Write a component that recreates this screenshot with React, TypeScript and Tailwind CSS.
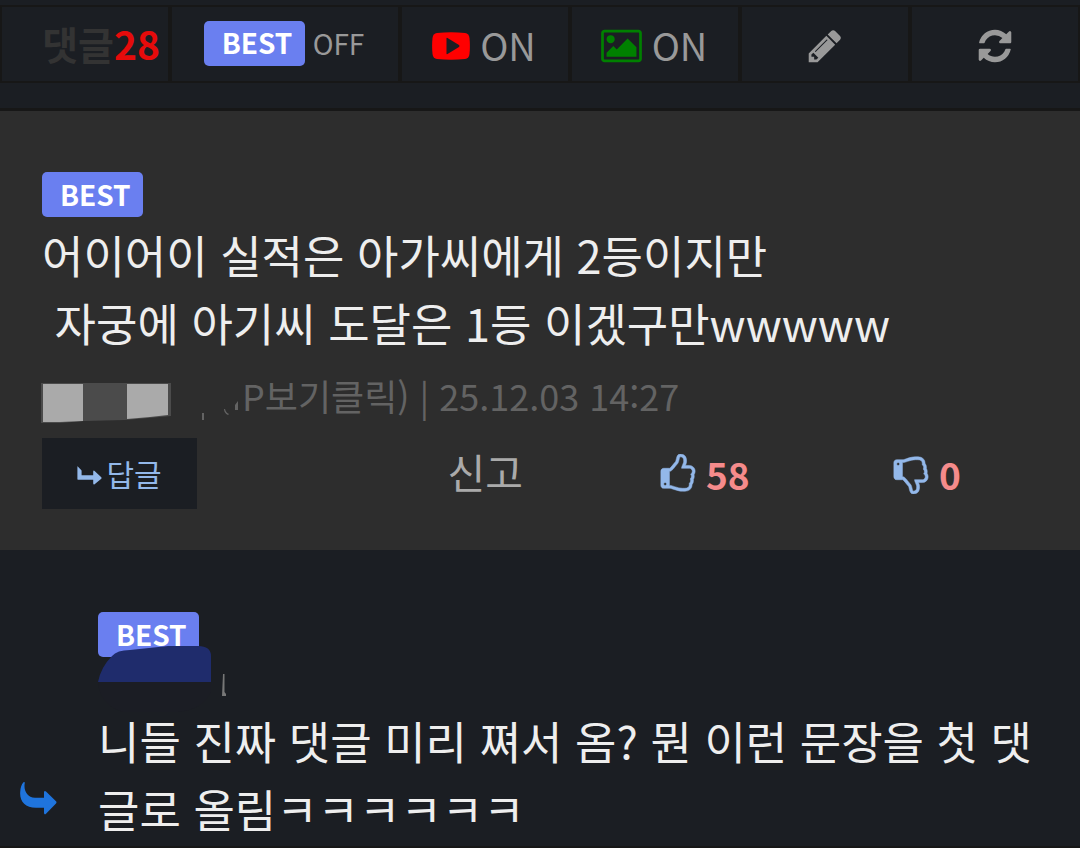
import React, { useState } from "react";

const PencilIcon = () => (
  <svg viewBox="0 0 1792 1792" className="mt-1 size-[38px] shrink-0" fill="currentColor" aria-hidden="true">
    <path d="M491 1536l91-91-235-235-91 91v107h128v128h107zm523-928q0-22-22-22-10 0-17 7l-542 542q-7 7-7 17 0 22 22 22 10 0 17-7l542-542q7-7 7-17zm-54-192l416 416-832 832h-416v-416zm683 96q0 53-37 90l-166 166-416-416 166-165q36-38 90-38 53 0 91 38l235 234q37 39 37 91z" />
  </svg>
);

const RefreshIcon = () => (
  <svg viewBox="0 0 1792 1792" className="mt-1 size-[38px] shrink-0" fill="currentColor" aria-hidden="true">
    <path d="M1639 1056q0 5-1 7-64 268-268 434.5t-478 166.5q-146 0-282.5-55t-243.5-157l-129 129q-19 19-45 19t-45-19-19-45v-448q0-26 19-45t45-19h448q26 0 45 19t19 45-19 45l-137 137q71 66 161 102t187 36q134 0 250-65t186-179q11-17 53-117 8-23 30-23h192q13 0 22.5 9.5t9.5 22.5zm25-800v448q0 26-19 45t-45 19h-448q-26 0-45-19t-19-45 19-45l138-138q-148-137-349-137-134 0-250 65t-186 179q-11 17-53 117-8 23-30 23h-199q-13 0-22.5-9.5t-9.5-22.5v-7q65-268 270-434.5t480-166.5q146 0 284 55.5t245 156.5l130-129q19-19 45-19t45 19 19 45z" />
  </svg>
);

const PictureIcon = () => (
  <svg viewBox="-64 0 1920 1792" className="mt-1 h-[38px] w-[41px] shrink-0 text-[#008000]" fill="currentColor" aria-hidden="true">
    <path d="M576 576q0 80-56 136t-136 56-136-56-56-136 56-136 136-56 136 56 56 136zm1024 384v448h-1408v-192l320-320 160 160 512-512zm96-704h-1600q-13 0-22.5 9.5t-9.5 22.5v1216q0 13 9.5 22.5t22.5 9.5h1600q13 0 22.5-9.5t9.5-22.5v-1216q0-13-9.5-22.5t-22.5-9.5zm160 32v1216q0 66-47 113t-113 47h-1600q-66 0-113-47t-47-113v-1216q0-66 47-113t113-47h1600q66 0 113 47t47 113z" />
  </svg>
);

const YoutubeIcon = () => (
  <svg viewBox="0 0 38 28" className="mt-1 h-7 w-[38px] shrink-0" aria-hidden="true">
    <path
      d="M5 1Q19-.4 33 1Q37 1.500 37.500 6Q38.300 14 37.500 22Q37 26.500 33 27Q19 28.400 5 27Q1 26.500.500 22Q-.3 14 .500 6Q1 1.500 5 1Z"
      fill="#ff0000"
    />
    <path d="M14.500 6.500Q14.500 5.500 15.500 6L27 13Q28 14 27 15L15.500 22Q14.500 22.500 14.500 21.500Z" fill="#1b1e23" />
  </svg>
);

const ThumbIcon = ({ down }: { down?: boolean }) => (
  <svg
    viewBox="0 0 1792 1792"
    className={down ? "size-10 shrink-0 -scale-y-100" : "size-10 shrink-0"}
    fill="#93b8ea"
    stroke="#93b8ea"
    strokeWidth="24"
    aria-hidden="true"
  >
    <path d="M384 1344q0-26-19-45t-45-19-45 19-19 45 19 45 45 19 45-19 19-45zm1152-576q0-51-39-89.500t-89-38.500h-352q0-58 48-159.500t48-160.500q0-98-32-145t-128-47q-26 26-38 85t-30.500 125.500-59.500 109.500q-22 23-77 91-4 5-23 30t-31.500 41-34.500 42.500-40 44-38.500 35.500-40 27-35.500 9h-32v640h32q13 0 31.500 3t33 6.500 38 11 35 11.500 35.500 12.500 29 10.500q211 73 342 73h121q192 0 192-167 0-26-5-56 30-16 47.500-52.500t17.500-73.500-18-69q53-50 53-119 0-25-10-55.500t-25-47.500q32-1 53.500-47t21.500-81zm128-1q0 89-49 163 9 33 9 69 0 77-38 144 3 21 3 43 0 101-60 178 1 139-85 219.500t-227 80.500h-129q-96 0-189.500-22.500t-216.500-65.500q-116-40-138-40h-288q-53 0-90.500-37.500t-37.500-90.500v-640q0-53 37.500-90.500t90.500-37.500h274q36-24 137-155 58-75 107-128 24-25 35.500-85.500t30.500-126.500 62-108q39-37 90-37 84 0 151 32.500t102 101.500 35 186q0 93-48 192h176q104 0 180 76t76 179z" />
  </svg>
);

const LevelIcon = () => (
  <svg viewBox="0 0 25 19" className="mt-1 h-[19px] w-[25px] shrink-0" fill="#93b8ea" aria-hidden="true">
    <path d="M.4.6Q0 0 .8.400L4.200 4Q4.600 4.500 4.600 5V9.300H16.200V5.500Q16.500 4 17.600 5L24.300 11.200Q24.900 12 24.300 12.700L17.600 18.300Q16.500 19 16.200 17.600V13.700H.9Q.4 13.700.4 13Z" />
  </svg>
);

const ReplyArrow = () => (
  <svg viewBox="0 0 37 33" className="h-[33px] w-[37px] shrink-0" fill="#1f74dd" aria-hidden="true">
    <path d="M3.500.200C4.500-.3 5 .2 4.700 1.500C3.500 8 7 15.800 15 15.800H24V10.500C24 9 25 8.500 26 9.500L36 19.200Q37 20.300 36 21.400L26 31.800C25 32.800 24 32.200 24 30.800V25.800H16C5 25.800-.5 19 .2 10C.5 5.500 1.500 2 3.500.200Z" />
  </svg>
);

const BestBadge = () => (
  <span className="inline-flex h-[45px] w-[101px] shrink-0 items-center rounded-[5px] bg-[#6a7ff0] pl-[18px] pb-0.5 text-[28px] font-bold leading-none text-white">
    BEST
  </span>
);

const cell = "flex items-center justify-center border-2 border-[#171717] text-[#999999]";

const App = () => {
  const [best, setBest] = useState(false);
  const [video, setVideo] = useState(true);
  const [image, setImage] = useState(true);

  return (
    <main
      lang="ko"
      className="min-h-screen bg-[#1b1e23] pt-[5px] font-['Noto_Sans_CJK_KR',sans-serif] text-[#eeeeee]"
    >
      <div className="grid h-[78px] grid-cols-[17fr_23fr_17fr_17fr_17fr_17fr]">
        <h2 className="flex items-center justify-end whitespace-nowrap border-2 border-[#171717] pr-2 pb-0.5 text-[39px] font-bold leading-none text-[#333333]">
          댓글<span className="text-[#e60b0b]">28</span>
        </h2>
        <button className={`${cell} gap-2 pr-0.5 pb-0.5 text-[28px]`} onClick={() => setBest(!best)}>
          <BestBadge />
          <span>{best ? "ON" : "OFF"}</span>
        </button>
        <button className={`${cell} gap-[10px] pr-0.5 text-[38px]`} onClick={() => setVideo(!video)}>
          <YoutubeIcon />
          <span>{video ? "ON" : "OFF"}</span>
        </button>
        <button className={`${cell} gap-[10px] pr-0.5 text-[38px]`} onClick={() => setImage(!image)}>
          <PictureIcon />
          <span>{image ? "ON" : "OFF"}</span>
        </button>
        <button className={cell} aria-label="댓글 쓰기">
          <PencilIcon />
        </button>
        <button className={cell} aria-label="새로고침">
          <RefreshIcon />
        </button>
      </div>

      <article className="mt-[25px] border-t-[3px] border-[#171717] bg-[#2d2d2d] px-[42px] pt-[61px] pb-[41px]">
        <div className="flex">
          <BestBadge />
        </div>
        <p className="mt-1 whitespace-pre-wrap text-[45px] leading-[68px]">
          {"어이어이 실적은 아가씨에게 2등이지만\n 자궁에 아기씨 도달은 1등 이겠구만wwwww"}
        </p>
        <div className="mt-2 mb-[13px] flex h-[60px] items-center text-[36px] leading-[60px] text-[#636363]">
          {/* masked nickname */}
          <svg viewBox="0 0 202 60" className="-ml-0.5 h-[60px] w-[202px] shrink-0" aria-hidden="true">
            <path d="M1 18H131V51L85 55L44 56L20 58H1Z" fill="#4b4b4b" />
            <path d="M3 19H43V56L20 57H3Z" fill="#aaaaaa" />
            <path d="M87 19H128V50L110 52L87 54Z" fill="#aaaaaa" />
            <path d="M162 48H164V55H162ZM185 44Q186 48 189 49L188 50Q184 48 184 44ZM195 40L198 36V45H195Z" fill="#636363" />
          </svg>
          <span>P보기클릭) | 25.12.03 14:27</span>
        </div>
        <div className="grid grid-cols-[155fr_266fr_195fr_233fr_147fr] items-center">
          <button className="flex h-[71px] items-center justify-center gap-1 bg-[#1b1e23] text-[30px] text-[#93b8ea]">
            <LevelIcon />
            답글
          </button>
          <button className="pb-1.5 text-right text-[41px] leading-[60px] text-[#aaaaaa]">
            <span className="-mr-[60px]">신고</span>
          </button>
          <button className="col-start-4 flex items-center gap-2 text-[37px] font-bold leading-[60px] text-[#f58b8b]">
            <ThumbIcon />
            58
          </button>
          <button className="flex items-center gap-2 text-[37px] font-bold leading-[60px] text-[#f58b8b]">
            <ThumbIcon down />0
          </button>
        </div>
      </article>

      <article className="flex items-end border-b-2 border-[#171717] pt-[62px] pr-[42px] pb-[3px] pl-5">
        <div className="w-[78px] shrink-0 pb-7">
          <ReplyArrow />
        </div>
        <div className="min-w-0 flex-1">
          <div className="relative flex h-[95px]">
            <BestBadge />
            <svg viewBox="0 0 134 70" className="absolute top-[30px] left-0 h-[70px] w-[134px]" aria-hidden="true">
              <path d="M0 40H113V50Q104 68 80 70H25Q2 63 0 40Z" fill="#1b1d24" />
              <path d="M0 40Q3 25 14 14Q19 8 32 8L70 4H100Q113 4 113 14V40Z" fill="#1f2c6c" />
              <path d="M125 32H126.500V50L128 52V54H124Z" fill="#777777" />
            </svg>
          </div>
          <p className="text-[45px] leading-[68px]">
            니들 진짜 댓글 미리 쪄서 옴? 뭔 이런 문장을 첫 댓글로 올림ㅋㅋㅋㅋㅋㅋ
          </p>
        </div>
      </article>
    </main>
  );
};

export default App;
